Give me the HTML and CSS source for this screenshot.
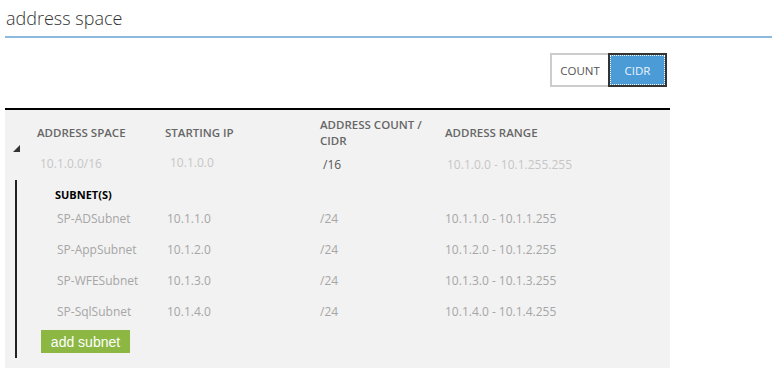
FILE: index.html
```html
<!DOCTYPE html>
<html>
<head>
<meta charset="utf-8">
<link rel="stylesheet" href="styles.css">
</head>
<body>
<div class="page">
  <div class="title">address space</div>
  <div class="toolbar">
    <div class="toggle">
      <button class="seg">COUNT</button>
      <button class="seg active">CIDR</button>
    </div>
  </div>
  <div class="panel">
    <div class="top-grid">
      <div class="expander"><span class="tri"></span></div>
      <div class="th">ADDRESS SPACE</div>
      <div class="th">STARTING IP</div>
      <div class="th">ADDRESS COUNT /<br>CIDR</div>
      <div class="th">ADDRESS RANGE</div>
      <div class="td dis c1">10.1.0.0/16</div>
      <div class="td dis c2">10.1.0.0</div>
      <div class="td dark c3">/16</div>
      <div class="td dis c4">10.1.0.0 - 10.1.255.255</div>
    </div>
    <div class="subnets">
      <div class="sub-title">SUBNET(S)</div>
      <div class="sub-row"><span>SP-ADSubnet</span><span>10.1.1.0</span><span>/24</span><span>10.1.1.0 - 10.1.1.255</span></div>
      <div class="sub-row"><span>SP-AppSubnet</span><span>10.1.2.0</span><span>/24</span><span>10.1.2.0 - 10.1.2.255</span></div>
      <div class="sub-row"><span>SP-WFESubnet</span><span>10.1.3.0</span><span>/24</span><span>10.1.3.0 - 10.1.3.255</span></div>
      <div class="sub-row"><span>SP-SqlSubnet</span><span>10.1.4.0</span><span>/24</span><span>10.1.4.0 - 10.1.4.255</span></div>
      <button class="add-btn">add subnet</button>
    </div>
  </div>
</div>
</body>
</html>
```
FILE: styles.css
```css
* { box-sizing: border-box; }
html, body { margin: 0; padding: 0; background: #fff; }
body { font-family: "Open Sans", "Noto Sans", sans-serif; }
.page { padding-left: 5px; }
.title {
  height: 38px;
  line-height: 36px;
  padding-left: 1px;
  font-size: 18px;
  font-weight: 300;
  color: #333;
  border-bottom: 2px solid #8cb9de;
}
.toolbar {
  width: 665px;
  display: flex;
  justify-content: flex-end;
  padding: 15px 3px 0 0;
  height: 70px;
}
.toggle { display: flex; height: 34px; }
.seg {
  font-family: inherit;
  font-size: 11.5px;
  margin: 0;
  padding: 0;
  height: 34px;
  border: 2px solid #cccccc;
  background: #fff;
  color: #555;
}
.seg:first-child { width: 58px; border-right: none; }
.seg.active {
  width: 59px;
  background: #4a9bd6;
  border: 2px solid #333;
  color: #eef5fc;
  outline: 1px dotted #fff;
  outline-offset: -3px;
}
.panel {
  width: 665px;
  background: #f2f2f2;
  border-top: 2px solid #000;
  padding-bottom: 10px;
}
.top-grid {
  display: grid;
  grid-template-columns: 32px 128px 155px 125px 1fr;
  grid-template-rows: 33px 30px;
  padding-top: 7px;
}
.expander {
  grid-row: 1 / span 2;
  display: flex;
  align-items: center;
  padding-left: 8px;
}
.tri {
  width: 0; height: 0;
  border-left: 7px solid transparent;
  border-bottom: 7px solid #333;
}
.th {
  font-size: 11.5px;
  font-weight: 600;
  color: #666;
  line-height: 16px;
  align-self: start;
  display: flex;
  align-items: center;
  height: 32px;
}
.td {
  font-size: 12px;
  line-height: 30px;
}
.dis { color: #c6c6c6; }
.dark { color: #555; }
.c1 { padding-left: 3px; margin-top: -1px; }
.c2 { padding-left: 5px; margin-top: -2px; }
.c3 { padding-left: 3px; }
.c4 { padding-left: 2px; }
.subnets {
  margin-left: 10px;
  border-left: 2px solid #222;
  padding: 7px 0 5px 0;
}
.sub-title {
  font-size: 11px;
  font-weight: 700;
  color: #000;
  line-height: 16px;
  padding-left: 38px;
}
.sub-row {
  display: grid;
  grid-template-columns: 110px 153px 125px 1fr;
  padding-left: 40px;
  height: 31px;
  line-height: 31px;
  font-size: 12px;
  color: #a6a6a6;
}
.add-btn {
  display: block;
  margin: 3px 0 0 24px;
  width: 89px;
  height: 23px;
  padding: 0;
  border: none;
  background: #8bb742;
  color: #fff;
  font-family: "Liberation Sans", Arial, sans-serif;
  font-size: 14px;
}
```
